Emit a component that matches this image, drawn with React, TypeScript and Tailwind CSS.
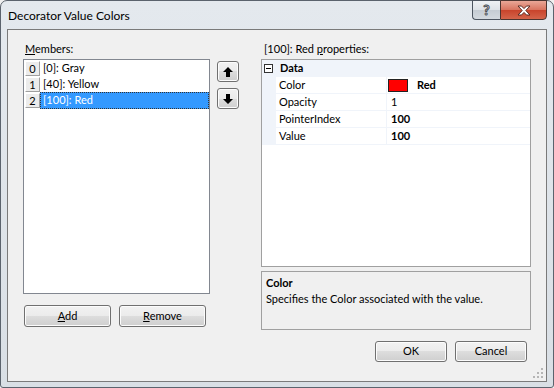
import React from "react";

const btn =
  "flex items-center justify-center rounded-[3px] border border-[#707070] bg-[linear-gradient(#f2f2f2,#ebebeb_50%,#dddddd_50%,#cfcfcf)] shadow-[inset_0_0_0_1px_#fcfcfc]";

const Arrow = ({ down = false }: { down?: boolean }) => (
  <svg width="10" height="10" viewBox="0 0 10 10" className={down ? "rotate-180" : ""}>
    <polygon points="5,0 10,5 7,5 7,10 3,10 3,5 0,5" fill="#000" />
  </svg>
);

const members = ["[0]: Gray", "[40]: Yellow", "[100]: Red"];

const props = [
  { name: "Color", value: "Red", swatch: true, bold: true },
  { name: "Opacity", value: "1", bold: false },
  { name: "PointerIndex", value: "100", bold: true },
  { name: "Value", value: "100", bold: true },
];

export default function App() {
  return (
    <div className="h-[388px] w-[554px] overflow-hidden bg-[#f0f0f0]">
      <div className="flex h-full w-full flex-col rounded-t-[7px] rounded-b-[3px] border border-[#5b636d] bg-[linear-gradient(#e4e9ee,#d9dfe5)] px-[6px] pb-[5px] font-['Lato',sans-serif] text-[11px] text-black">
        {/* title bar */}
        <div className="flex h-[28px] items-start justify-between">
          <div className="mt-[7px] pl-[1px] text-[12px] leading-[16px]">Decorator Value Colors</div>
          <div className="-mt-[1px] flex h-[20px]">
            <div className="flex w-[28px] items-center justify-center rounded-bl-[4px] border border-r-0 border-[#4c5560] bg-[linear-gradient(#eef1f4,#dde2e7_50%,#c5ccd3_50%,#d3d9df)]">
              <span className="text-[14px] font-bold leading-none text-white [-webkit-text-stroke:1px_#4a4f55]">?</span>
            </div>
            <div className="flex w-[47px] items-center justify-center rounded-br-[4px] border border-[#4c3530] bg-[linear-gradient(#e9a797,#d8735e_50%,#c8432b_50%,#d4644a)]">
              <svg width="14" height="11" viewBox="0 0 14 11">
                <polygon
                  points="1,1 4.5,1 7,3.6 9.5,1 13,1 8.8,5.5 13,10 9.5,10 7,7.4 4.5,10 1,10 5.2,5.5"
                  fill="#fff"
                  stroke="#5a2b22"
                  strokeWidth="1"
                  strokeLinejoin="round"
                />
              </svg>
            </div>
          </div>
        </div>

        {/* client area */}
        <div className="relative flex h-[353px] border border-[#7a7a7a] bg-[#f0f0f0] pl-[15px] pt-[10px]">
          {/* left column */}
          <div className="flex w-[187px] flex-col">
            <div className="h-[19px] pl-[2px] pt-[1px] leading-[16px]">
              <u>M</u>embers:
            </div>
            <div className="h-[235px] border border-[#828790] bg-white">
              {members.map((m, i) => {
                const sel = i === 2;
                return (
                  <div key={m} className="flex h-[16px] items-center">
                    <div className="ml-[1px] flex h-[15px] w-[15px] items-center justify-center border border-b-[#a0a0a0] border-l-white border-r-[#a0a0a0] border-t-white bg-[#ececec] leading-none">
                      {i}
                    </div>
                    <div
                      className={
                        sel
                          ? "flex h-[17px] flex-1 items-center border border-dotted border-[#333] bg-[#3399ff] pl-[2px] text-white"
                          : "flex h-[16px] flex-1 items-center pl-[3px]"
                      }
                    >
                      {m}
                    </div>
                  </div>
                );
              })}
            </div>
            <div className="mt-[11px] flex h-[22px] gap-[8px] pl-[1px]">
              <button className={`${btn} w-[87px]`}>
                <span>
                  <u>A</u>dd
                </span>
              </button>
              <button className={`${btn} w-[87px]`}>
                <span>
                  <u>R</u>emove
                </span>
              </button>
            </div>
          </div>

          {/* up / down */}
          <div className="ml-[7px] flex flex-col gap-[6px] pt-[21px]">
            <button className={`${btn} h-[21px] w-[22px]`}>
              <Arrow />
            </button>
            <button className={`${btn} h-[21px] w-[22px]`}>
              <Arrow down />
            </button>
          </div>

          {/* right column */}
          <div className="ml-[22px] flex w-[270px] flex-col">
            <div className="h-[19px] pl-[3px] pt-[1px] leading-[16px]">
              [100]: Red <u>p</u>roperties:
            </div>
            <div className="h-[208px] border border-[#a0a0a0] bg-white">
              <div className="flex h-[17px] items-center border-b border-[#f0f4fa] bg-[#f0f4fa]">
                <div className="ml-[2px] flex h-[9px] w-[9px] items-center justify-center border border-[#333] bg-white">
                  <div className="h-px w-[5px] bg-black" />
                </div>
                <div className="ml-[7px] font-bold">Data</div>
              </div>
              {props.map((p) => (
                <div key={p.name} className="flex h-[17px] border-b border-[#f0f4fa]">
                  <div className="w-[14px] bg-[#f0f4fa]" />
                  <div className="flex w-[111px] items-center border-r border-[#f0f4fa] pl-[3px]">{p.name}</div>
                  <div className={`flex flex-1 items-center ${p.swatch ? "pl-[1px]" : "pl-[4px]"} ${p.bold ? "font-bold" : ""}`}>
                    {p.swatch && <div className="mr-[9px] h-[13px] w-[20px] border border-[#222] bg-[#ff0000]" />}
                    {p.value}
                  </div>
                </div>
              ))}
            </div>
            <div className="mt-[4px] h-[59px] border border-[#a0a0a0] bg-[#f0f0f0] pl-[4px] pt-[3px] leading-[16px]">
              <div className="font-bold">Color</div>
              <div>Specifies the Color associated with the value.</div>
            </div>
            <div className="mt-[11px] flex justify-end gap-[8px] pr-[4px]">
              <button className={`${btn} h-[21px] w-[72px] border-[#3c7fb1] shadow-[inset_0_0_0_1px_#b5e2f7]`}>OK</button>
              <button className={`${btn} h-[21px] w-[72px]`}>Cancel</button>
            </div>
          </div>

          {/* size grip */}
          <svg className="absolute bottom-[2px] right-[2px]" width="11" height="11" viewBox="0 0 11 11">
            {[
              [8, 0],
              [8, 4],
              [4, 4],
              [8, 8],
              [4, 8],
              [0, 8],
            ].map(([x, y]) => (
              <rect key={`${x}-${y}`} x={x} y={y} width="2" height="2" fill="#b5b5b5" />
            ))}
          </svg>
        </div>
      </div>
    </div>
  );
}
